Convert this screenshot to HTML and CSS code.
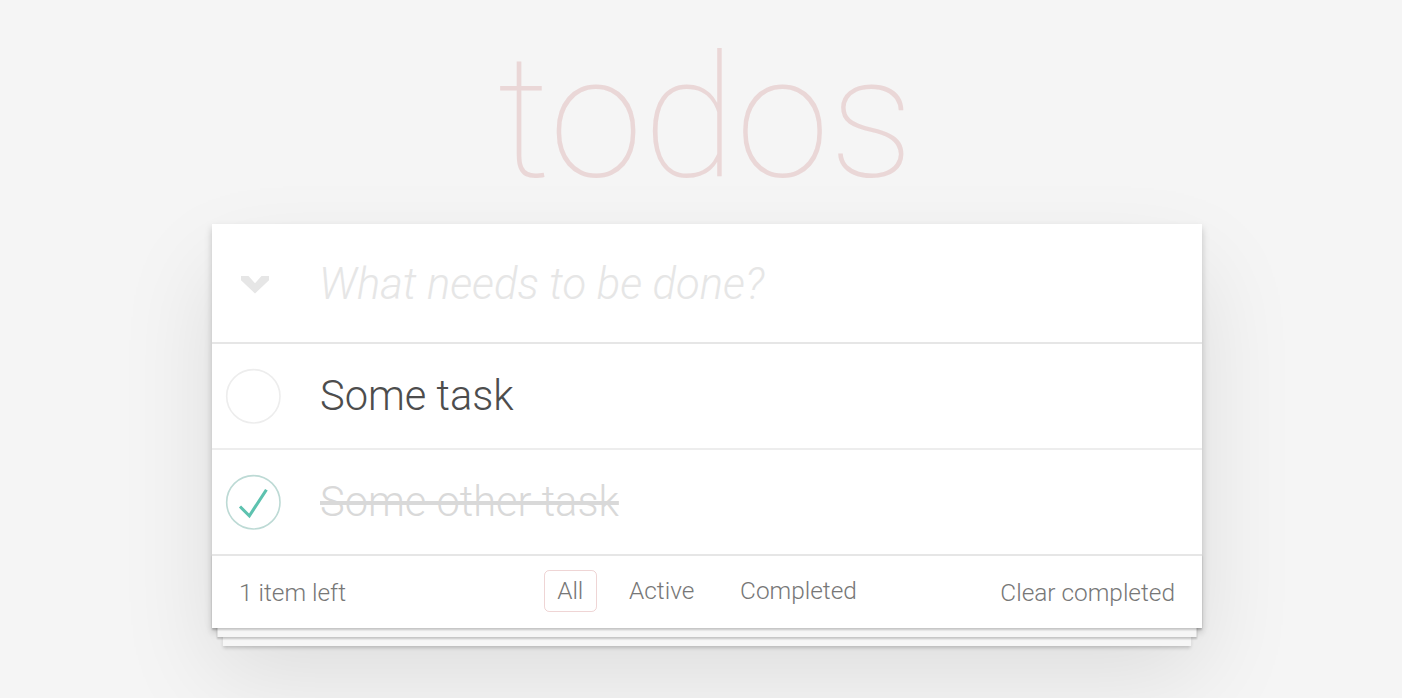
FILE: index.html
```html
<!DOCTYPE html>
<html lang="en">
<head>
<meta charset="utf-8">
<title>Todos</title>
<link rel="stylesheet" href="styles.css">
</head>
<body>
<section class="todoapp">
  <h1 class="title">todos</h1>
  <div class="card">
    <header class="header">
      <span class="toggle-all">
        <svg width="28" height="18" viewBox="0 0 28 18" aria-hidden="true"><polygon points="0,0 7.5,0 14,7.2 20.5,0 28,0 28,4.2 14,17.5 0,4.2" fill="#e6e6e6"/></svg>
      </span>
      <input class="new-todo" type="text" placeholder="What needs to be done?">
    </header>
    <ul class="todo-list">
      <li class="todo">
        <svg class="toggle" width="72" height="72" viewBox="-10 -18 100 135" aria-hidden="true"><circle cx="50" cy="50" r="50" fill="none" stroke="#ededed" stroke-width="3"/></svg>
        <label class="todo-label">Some task</label>
      </li>
      <li class="todo completed">
        <svg class="toggle" width="72" height="72" viewBox="-10 -18 100 135" aria-hidden="true"><circle cx="50" cy="50" r="50" fill="none" stroke="#bddad5" stroke-width="3"/><path fill="#5dc2af" d="M72 25L42 71 27 56l-4 4 20 20 34-52z"/></svg>
        <label class="todo-label">Some other task</label>
      </li>
    </ul>
    <footer class="footer">
      <span class="todo-count"><strong class="count">1</strong> item left</span>
      <ul class="filters">
        <li><a class="filter selected" href="#/">All</a></li>
        <li><a class="filter" href="#/active">Active</a></li>
        <li><a class="filter" href="#/completed">Completed</a></li>
      </ul>
      <button class="clear-completed" type="button">Clear completed</button>
    </footer>
  </div>
</section>
</body>
</html>
```

FILE: styles.css
```css
html, body {
  margin: 0;
  padding: 0;
}

body {
  background: #f5f5f5;
  color: #4d4d4d;
  font-family: Roboto, "Liberation Sans", Arial, sans-serif;
  font-weight: 300;
  padding-left: 12px;
}

.todoapp {
  width: 990px;
  margin: 0 auto;
  padding-bottom: 72px;
}

.title {
  margin: 0;
  padding: 28px 3px 16px 0;
  font-size: 170px;
  line-height: 180px;
  font-weight: 100;
  text-align: center;
  color: rgba(175, 47, 47, 0.15);
}

.card {
  background: #fff;
  box-shadow: 0 3.6px 7.2px 0 rgba(0, 0, 0, 0.2), 0 45px 90px 0 rgba(0, 0, 0, 0.1);
}

.header {
  height: 118px;
  display: grid;
  grid-template-columns: 107px 1fr;
  align-items: center;
}

.toggle-all {
  display: flex;
  margin-left: 29px;
  margin-top: 4px;
}

.new-todo {
  border: none;
  outline: none;
  background: transparent;
  margin: 0;
  padding: 3px 27px 0 0;
  height: 100%;
  width: 100%;
  box-sizing: border-box;
  font-family: inherit;
  font-size: 43.6px;
  font-weight: 300;
  color: #4d4d4d;
}

.new-todo::placeholder {
  color: #e6e6e6;
  font-style: italic;
  font-weight: 300;
}

.todo-list {
  list-style: none;
  margin: 0;
  padding: 0;
  border-top: 2px solid #e6e6e6;
}

.todo {
  display: flex;
  align-items: center;
  font-size: 41.6px;
  border-bottom: 2px solid #ededed;
}

.todo:last-child {
  border-bottom: none;
}

.toggle {
  flex: none;
}

.todo-label {
  flex: 1;
  display: block;
  padding: 26px 27px 26px 36px;
  line-height: 52px;
  word-break: break-all;
}

.completed .todo-label {
  color: #d9d9d9;
  text-decoration: line-through;
}

.footer {
  display: grid;
  grid-template-columns: 1fr auto 1fr;
  align-items: center;
  height: 36px;
  padding: 18px 27px;
  border-top: 2px solid #e6e6e6;
  color: #777;
  font-size: 24.4px;
  line-height: 36px;
  box-shadow: 0 1.8px 1.8px rgba(0, 0, 0, 0.2),
              0 14.4px 0 -5.4px #f6f6f6,
              0 16.2px 1.8px -5.4px rgba(0, 0, 0, 0.2),
              0 28.8px 0 -10.8px #f6f6f6,
              0 30.6px 3.6px -10.8px rgba(0, 0, 0, 0.2);
}

.todo-count {
  justify-self: start;
}

.count {
  font-weight: 300;
}

.filters {
  list-style: none;
  margin: -4px 0 0 0;
  padding: 0;
  display: flex;
  gap: 18.5px;
}

.filter {
  display: block;
  color: inherit;
  text-decoration: none;
  padding: 5.4px 12.6px;
  line-height: 29px;
  border: 1.8px solid transparent;
  border-radius: 5.4px;
}

.filter.selected {
  border-color: rgba(175, 47, 47, 0.2);
}

.clear-completed {
  justify-self: end;
  border: none;
  background: none;
  margin: 0;
  padding: 0;
  font-family: inherit;
  font-size: 24.4px;
  font-weight: 300;
  line-height: 36px;
  color: #777;
  cursor: pointer;
}
```
